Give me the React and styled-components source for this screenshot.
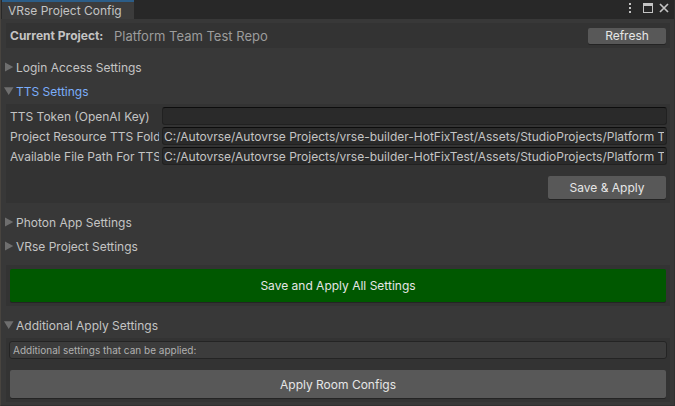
// src/App.jsx

import React, { useState } from "react";
import styled, { createGlobalStyle, ThemeProvider } from "styled-components";

const theme = {
  colors: {
    window: "#383838",
    titleBar: "#282828",
    tab: "#3c3c3c",
    tabAccent: "#2c5d87",
    box: "#333333",
    field: "#2a2a2a",
    fieldBorder: "#212121",
    fieldTop: "#0d0d0d",
    button: "#585858",
    buttonEdge: "#242424",
    save: "#005800",
    help: "#3c3c3c",
    text: "#c4c4c4",
    textMuted: "#9c9c9c",
    textButton: "#e6e6e6",
    active: "#7baefa",
    arrow: "#6e6e6e",
  },
  fontSizes: { small: "10px", medium: "12px", large: "13px" },
};

const GlobalStyle = createGlobalStyle`
  * {
    box-sizing: border-box;
  }

  body {
    margin: 0;
    background: ${({ theme }) => theme.colors.window};
    font-family: Inter, "Liberation Sans", sans-serif;
    font-size: ${({ theme }) => theme.fontSizes.medium};
    color: ${({ theme }) => theme.colors.text};
  }

  button,
  input {
    font: inherit;
    color: inherit;
  }
`;

// --- Styled Components ---
const Window = styled.div`
  min-height: 100vh;
  border: solid #303030;
  border-width: 0 1px 1px 0;
  border-left: 1px solid #48443f;
`;

const TitleBar = styled.header`
  display: flex;
  align-items: stretch;
  justify-content: space-between;
  height: 19px;
  padding: 0 4px 0 1px;
  background: ${({ theme }) => theme.colors.titleBar};
`;

const Tab = styled.h1`
  margin: 0;
  padding: 0 12px 0 6px;
  border-top: 2px solid ${({ theme }) => theme.colors.tabAccent};
  background: ${({ theme }) => theme.colors.tab};
  font-size: ${({ theme }) => theme.fontSizes.medium};
  font-weight: 400;
  line-height: 18px;
`;

const WindowControls = styled.div`
  display: flex;
  align-items: center;
  gap: 4px;
  padding-bottom: 3px;
`;

const IconButton = styled.button`
  display: flex;
  width: 12px;
  height: 12px;
  padding: 0;
  border: none;
  background: none;
`;

const Content = styled.main`
  display: flex;
  flex-direction: column;
  padding: 4px 4px 3px 5px;
`;

const Box = styled.section`
  display: flex;
  flex-direction: column;
  padding: 3px;
  background: ${({ theme }) => theme.colors.box};
`;

const ProjectBar = styled.div`
  display: flex;
  align-items: center;
  height: 25px;
  margin-bottom: 8px;
  padding: 0 4px;
  background: ${({ theme }) => theme.colors.box};
`;

const ProjectLabel = styled.span`
  width: 104px;
  font-weight: 700;
`;

const ProjectName = styled.span`
  flex: 1;
  font-size: ${({ theme }) => theme.fontSizes.large};
  color: ${({ theme }) => theme.colors.textMuted};
`;

const Button = styled.button`
  width: ${({ $width }) => $width || "auto"};
  height: ${({ $height }) => $height};
  padding: 0;
  border: none;
  border-radius: 2px;
  background: ${({ theme, $color }) => theme.colors[$color || "button"]};
  box-shadow: 0 1px 0 ${({ theme }) => theme.colors.buttonEdge};
  color: ${({ theme }) => theme.colors.textButton};
`;

const FoldoutHeader = styled.button`
  display: flex;
  align-items: center;
  gap: 2px;
  height: 18px;
  margin: 2px 0 4px;
  padding: 0;
  border: none;
  background: none;
  color: ${({ theme, $active }) =>
    $active ? theme.colors.active : theme.colors.text};

  svg {
    margin-left: -3px;
    fill: ${({ theme }) => theme.colors.arrow};
  }
`;

const FieldRow = styled.div`
  display: grid;
  grid-template-columns: 149px 1fr;
  gap: 3px;
  height: 18px;
  margin-bottom: 2px;
  padding-left: 1px;
`;

const FieldLabel = styled.label`
  overflow: hidden;
  line-height: 20px;
  white-space: nowrap;
`;

const TextField = styled.input`
  width: 100%;
  min-width: 0;
  height: 18px;
  padding: 0 2px 0 1px;
  border: 1px solid ${({ theme }) => theme.colors.fieldBorder};
  border-top-color: ${({ theme }) => theme.colors.fieldTop};
  border-radius: 3px;
  outline: none;
  background: ${({ theme }) => theme.colors.field};
`;

const ButtonRow = styled.div`
  display: flex;
  justify-content: flex-end;
  padding: 9px 1px 1px;
`;

const WideButtonArea = styled.div`
  display: grid;
  padding: 1px;
`;

const HelpBox = styled.p`
  height: 18px;
  margin: 0 0 10px;
  padding: 0 3px;
  border: 1px solid ${({ theme }) => theme.colors.buttonEdge};
  border-radius: 3px;
  background: ${({ theme }) => theme.colors.help};
  font-size: ${({ theme }) => theme.fontSizes.small};
  line-height: 16px;
  color: #b0b0b0;
`;

const Spacer = styled.div`
  height: ${({ $size }) => $size};
`;

// --- Component Logic ---
const Foldout = ({ title, defaultOpen = false, active, children }) => {
  const [open, setOpen] = useState(defaultOpen);

  return (
    <>
      <FoldoutHeader
        type="button"
        $active={active}
        aria-expanded={open}
        onClick={() => setOpen(!open)}
      >
        <svg width="11" height="10" viewBox="0 0 11 10" aria-hidden="true">
          <path d={open ? "M1 1.2h9.5L5.7 9z" : "M2 0.5v9L10.3 5z"} />
        </svg>
        {title}
      </FoldoutHeader>
      {open && children}
    </>
  );
};

const Field = ({ id, label, value }) => (
  <FieldRow>
    <FieldLabel htmlFor={id}>{label}</FieldLabel>
    <TextField id={id} type="text" defaultValue={value} spellCheck={false} />
  </FieldRow>
);

const PROJECT_PATH =
  "C:/Autovrse/Autovrse Projects/vrse-builder-HotFixTest/Assets/StudioProjects/Platform Team Test Repo";

const App = () => {
  return (
    <ThemeProvider theme={theme}>
      <GlobalStyle />
      <Window>
        <TitleBar>
          <Tab>VRse Project Config</Tab>
          <WindowControls>
            <IconButton type="button" aria-label="Menu">
              <svg width="12" height="12" fill="#c4c4c4">
                <path d="M3 1h2v2H3zM3 5h2v2H3zM3 9h2v2H3z" />
              </svg>
            </IconButton>
            <IconButton type="button" aria-label="Maximize">
              <svg width="12" height="12" fill="#c4c4c4">
                <path d="M1 1h10v10H1zM2 4v6h8V4z" fillRule="evenodd" />
              </svg>
            </IconButton>
            <IconButton type="button" aria-label="Close">
              <svg width="12" height="12" stroke="#c4c4c4" strokeWidth="1.7">
                <path d="M2 2l8 8M10 2l-8 8" />
              </svg>
            </IconButton>
          </WindowControls>
        </TitleBar>

        <Content>
          <ProjectBar>
            <ProjectLabel>Current Project:</ProjectLabel>
            <ProjectName>Platform Team Test Repo</ProjectName>
            <Button type="button" $width="78px" $height="16px">
              Refresh
            </Button>
          </ProjectBar>

          <Foldout title="Login Access Settings" />
          <Foldout title="TTS Settings" defaultOpen active>
            <Box>
              <Field id="tts-token" label="TTS Token (OpenAI Key)" value="" />
              <Field
                id="tts-folder"
                label="Project Resource TTS Folder"
                value={PROJECT_PATH}
              />
              <Field
                id="tts-path"
                label="Available File Path For TTS"
                value={PROJECT_PATH}
              />
              <ButtonRow>
                <Button type="button" $width="118px" $height="23px">
                  Save &amp; Apply
                </Button>
              </ButtonRow>
            </Box>
            <Spacer $size="8px" />
          </Foldout>
          <Foldout title="Photon App Settings" />
          <Foldout title="VRse Project Settings" />

          <Spacer $size="6px" />
          <Box>
            <WideButtonArea>
              <Button type="button" $height="33px" $color="save">
                Save and Apply All Settings
              </Button>
            </WideButtonArea>
          </Box>
          <Spacer $size="8px" />

          <Foldout title="Additional Apply Settings" defaultOpen>
            <Box>
              <HelpBox>Additional settings that can be applied:</HelpBox>
              <WideButtonArea>
                <Button type="button" $height="28px">
                  Apply Room Configs
                </Button>
              </WideButtonArea>
            </Box>
          </Foldout>
        </Content>
      </Window>
    </ThemeProvider>
  );
};

export default App;
